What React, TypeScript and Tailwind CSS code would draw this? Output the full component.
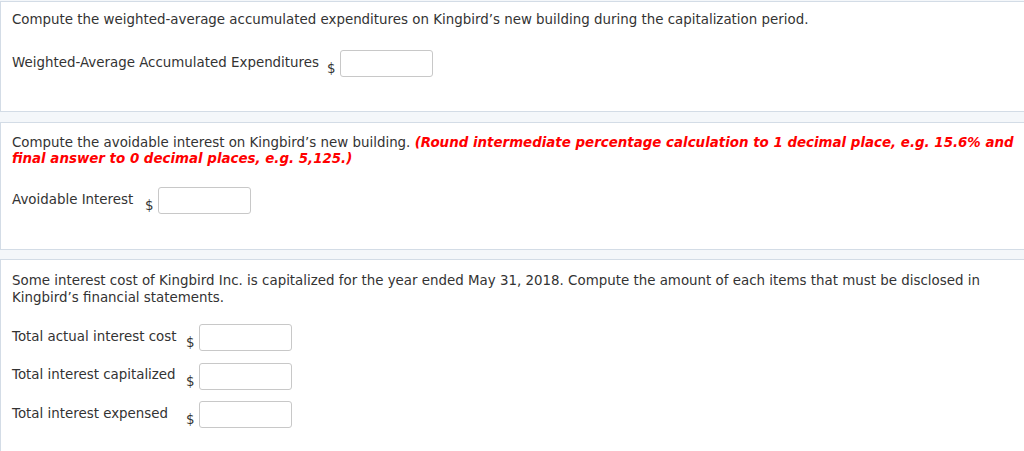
const font = { fontFamily: '"DejaVu Sans", Verdana, sans-serif' };

function MoneyField() {
	return (
		<div className="flex items-end gap-[4px]">
			<span className="mb-[1px] leading-[14px]">$</span>
			<input
				className="h-[27px] w-[93px] rounded-[3px] border border-[#c8c8c8] bg-white outline-none"
				type="text"
			/>
		</div>
	);
}

function FieldRow({ label, labelWidth }: { label: string; labelWidth: string }) {
	return (
		<div className="flex items-center">
			<span className={`${labelWidth} shrink-0 whitespace-nowrap pb-[2px]`}>{label}</span>
			<MoneyField />
		</div>
	);
}

export default function App() {
	return (
		<div
			className="min-h-[451px] w-full overflow-hidden bg-[#f4f7fa] pt-[1px] text-[13.4px] leading-[16px] text-[#333]"
			style={font}
		>
			<section className="h-[111px] border-y border-l border-[#d3dce6] bg-white pl-[11px] pt-[10px]">
				<p className="whitespace-nowrap">
					Compute the weighted-average accumulated expenditures on Kingbird’s new building during the capitalization period.
				</p>
				<div className="mt-[22px]">
					<FieldRow label="Weighted-Average Accumulated Expenditures" labelWidth="w-[315px]" />
				</div>
			</section>

			<section className="mt-[10px] h-[128px] border-y border-l border-[#d3dce6] bg-white pl-[11px] pt-[12px]">
				<p className="whitespace-nowrap">
					Compute the avoidable interest on Kingbird’s new building.{" "}
					<span className="font-bold italic text-[#ff0000]">
						(Round intermediate percentage calculation to 1 decimal place, e.g. 15.6% and
						<br />
						final answer to 0 decimal places, e.g. 5,125.)
					</span>
				</p>
				<div className="mt-[20px]">
					<FieldRow label="Avoidable Interest" labelWidth="w-[133px]" />
				</div>
			</section>

			<section className="mt-[9px] h-[200px] border-t border-l border-[#d3dce6] bg-white pl-[11px] pt-[12px]">
				<p className="whitespace-nowrap leading-[17px]">
					Some interest cost of Kingbird Inc. is capitalized for the year ended May 31, 2018. Compute the amount of each items that must be disclosed in
					<br />
					Kingbird’s financial statements.
				</p>
				<div className="mt-[18px] flex flex-col gap-[11.5px]">
					<FieldRow label="Total actual interest cost" labelWidth="w-[174px]" />
					<FieldRow label="Total interest capitalized" labelWidth="w-[174px]" />
					<FieldRow label="Total interest expensed" labelWidth="w-[174px]" />
				</div>
			</section>
		</div>
	);
}
